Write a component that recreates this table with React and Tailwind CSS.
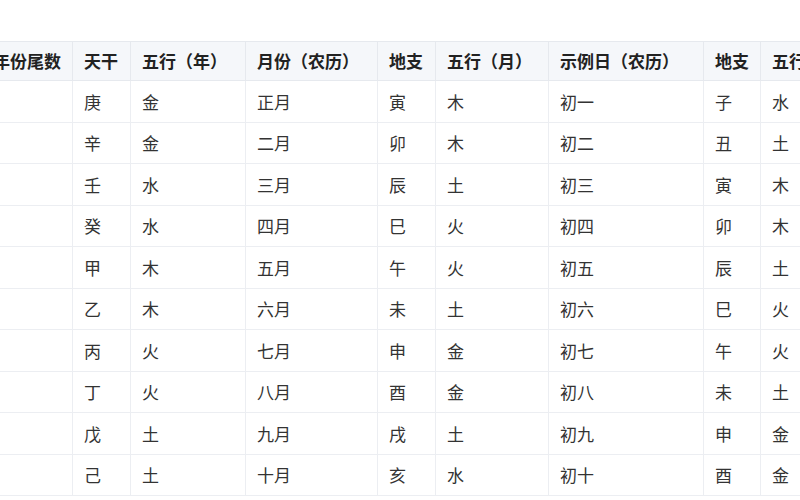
import React from 'react'

const headers = ['年份尾数', '天干', '五行（年）', '月份（农历）', '地支', '五行（月）', '示例日（农历）', '地支', '五行（日）']
const widths = ['w-[91px]', 'w-[58px]', 'w-[115px]', 'w-[132px]', 'w-[58px]', 'w-[113px]', 'w-[155px]', 'w-[57px]', 'w-[113px]']

const rows = [
  ['', '庚', '金', '正月', '寅', '木', '初一', '子', '水'],
  ['', '辛', '金', '二月', '卯', '木', '初二', '丑', '土'],
  ['', '壬', '水', '三月', '辰', '土', '初三', '寅', '木'],
  ['', '癸', '水', '四月', '巳', '火', '初四', '卯', '木'],
  ['', '甲', '木', '五月', '午', '火', '初五', '辰', '土'],
  ['', '乙', '木', '六月', '未', '土', '初六', '巳', '火'],
  ['', '丙', '火', '七月', '申', '金', '初七', '午', '火'],
  ['', '丁', '火', '八月', '酉', '金', '初八', '未', '土'],
  ['', '戊', '土', '九月', '戌', '土', '初九', '申', '金'],
  ['', '己', '土', '十月', '亥', '水', '初十', '酉', '金'],
]

// full-width parens render narrow here, so give each its own 1em box
function Label({ text }) {
  return text.split(/([（）])/).map((part, i) => {
    if (part === '（') return <span key={i} className="inline-block w-[1em] text-right">（</span>
    if (part === '）') return <span key={i} className="inline-block w-[1em] text-left">）</span>
    return part
  })
}

export default function App() {
  return (
    <div
      className="w-[800px] h-[500px] overflow-hidden bg-white pt-[41px]"
      style={{ fontFamily: '"Noto Sans CJK SC", "Noto Sans", sans-serif' }}
    >
      <table className="-ml-[19px] w-[892px] min-w-[892px] table-fixed border-collapse text-[17px] text-[#333]">
        <colgroup>
          {widths.map((w, i) => (
            <col key={i} className={w} />
          ))}
        </colgroup>
        <thead>
          <tr className="h-[39px] bg-[#f5f7fa]">
            {headers.map((h, i) => (
              <th
                key={i}
                className="border border-[#e6e9ee] px-[11px] text-left font-bold text-[#222] whitespace-nowrap overflow-hidden"
              >
                <Label text={h} />
              </th>
            ))}
          </tr>
        </thead>
        <tbody>
          {rows.map((r, ri) => (
            <tr key={ri} className="h-[41.5px]">
              {r.map((c, ci) => (
                <td key={ci} className="border border-[#eceef2] px-[11px] whitespace-nowrap">
                  {c}
                </td>
              ))}
            </tr>
          ))}
        </tbody>
      </table>
    </div>
  )
}
